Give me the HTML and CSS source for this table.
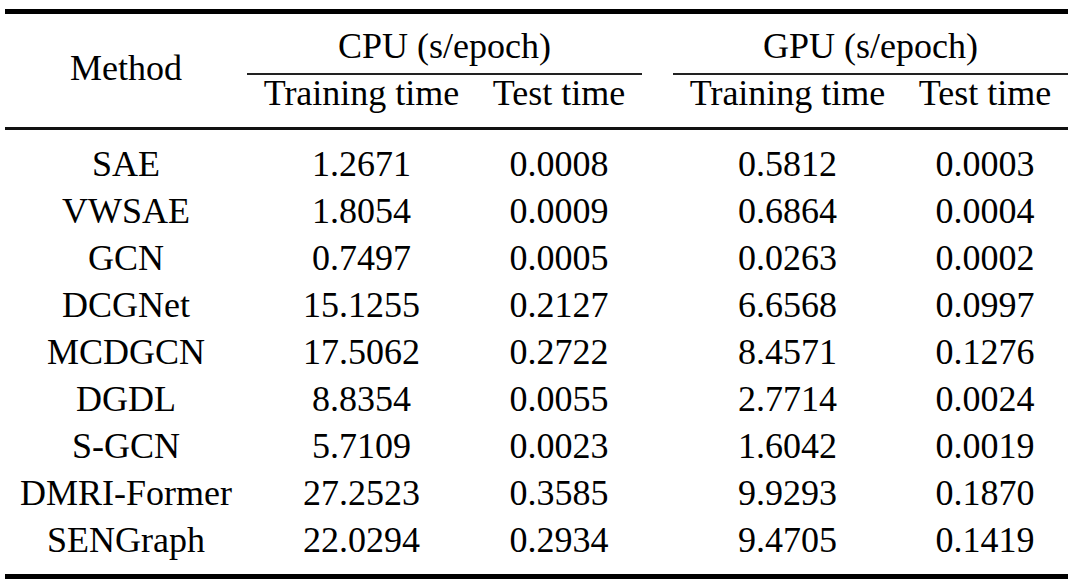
FILE: index.html
```html
<!DOCTYPE html>
<html lang="en">
<head>
<meta charset="utf-8">
<title>Timing comparison</title>
<link rel="stylesheet" href="styles.css">
</head>
<body>
<table class="tbl">
  <colgroup>
    <col class="c-method">
    <col class="c-train">
    <col class="c-test">
    <col class="c-gap">
    <col class="c-train2">
    <col class="c-test2">
  </colgroup>
  <thead>
    <tr class="hr1">
      <th class="method" rowspan="2">Method</th>
      <th class="group" colspan="2">CPU (s/epoch)</th>
      <th class="gap"></th>
      <th class="group" colspan="2">GPU (s/epoch)</th>
    </tr>
    <tr class="hr2">
      <th>Training time</th>
      <th>Test time</th>
      <th class="gap"></th>
      <th>Training time</th>
      <th>Test time</th>
    </tr>
  </thead>
  <tbody>
    <tr><td>SAE</td><td>1.2671</td><td>0.0008</td><td class="gap"></td><td>0.5812</td><td>0.0003</td></tr>
    <tr><td>VWSAE</td><td>1.8054</td><td>0.0009</td><td class="gap"></td><td>0.6864</td><td>0.0004</td></tr>
    <tr><td>GCN</td><td>0.7497</td><td>0.0005</td><td class="gap"></td><td>0.0263</td><td>0.0002</td></tr>
    <tr><td>DCGNet</td><td>15.1255</td><td>0.2127</td><td class="gap"></td><td>6.6568</td><td>0.0997</td></tr>
    <tr><td>MCDGCN</td><td>17.5062</td><td>0.2722</td><td class="gap"></td><td>8.4571</td><td>0.1276</td></tr>
    <tr><td>DGDL</td><td>8.8354</td><td>0.0055</td><td class="gap"></td><td>2.7714</td><td>0.0024</td></tr>
    <tr><td>S-GCN</td><td>5.7109</td><td>0.0023</td><td class="gap"></td><td>1.6042</td><td>0.0019</td></tr>
    <tr><td>DMRI-Former</td><td>27.2523</td><td>0.3585</td><td class="gap"></td><td>9.9293</td><td>0.1870</td></tr>
    <tr><td>SENGraph</td><td>22.0294</td><td>0.2934</td><td class="gap"></td><td>9.4705</td><td>0.1419</td></tr>
  </tbody>
</table>
</body>
</html>
```

FILE: styles.css
```css
html, body {
  margin: 0;
  padding: 0;
  background: #ffffff;
}

body {
  font-family: "Liberation Serif", "Times New Roman", serif;
  font-size: 36px;
  color: #000000;
}

.tbl {
  margin: 9px 0 0 5px;
  width: 1063px;
  table-layout: fixed;
  border-collapse: separate;
  border-spacing: 0;
  border-top: 5px solid #000;
  border-bottom: 5px solid #000;
}

.c-method { width: 242px; }
.c-train  { width: 229px; }
.c-test   { width: 166px; }
.c-gap    { width: 31px; }
.c-train2 { width: 229px; }
.c-test2  { width: 166px; }

.tbl th,
.tbl td {
  padding: 0;
  text-align: center;
  font-weight: normal;
  white-space: nowrap;
}

.hr1 th {
  padding-top: 12px;
  padding-bottom: 7px;
  line-height: 40px;
}

.hr1 th.method {
  vertical-align: middle;
  line-height: 40px;
  padding-top: 0;
  padding-bottom: 6px;
  border-bottom: 3px solid #111;
}

.hr1 th.group {
  border-bottom: 2px solid #222;
}

.hr2 th {
  line-height: 36px;
  padding-bottom: 16px;
  border-bottom: 3px solid #111;
}

.tbl td {
  line-height: 47px;
}

.tbl tbody tr:first-child td {
  padding-top: 11px;
}

.tbl tbody tr:last-child td {
  padding-bottom: 10px;
}
```
